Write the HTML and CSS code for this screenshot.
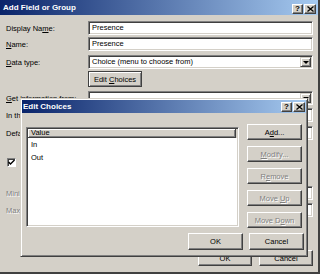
FILE: index.html
```html
<!DOCTYPE html>
<html lang="en">
<head>
    <meta charset="UTF-8">
    <title>Add Field or Group</title>
    <link rel="stylesheet" href="styles.css">
</head>
<body>
    <div class="dialog main">
        <div class="titlebar">
            <span class="title">Add Field or Group</span>
            <span class="tb-btns">
                <span class="tb-btn help">?</span>
                <span class="tb-btn close">
                    <svg width="7" height="6" viewBox="0 0 7 6"><path d="M0.5 0.5 L6.5 5.5 M6.5 0.5 L0.5 5.5" stroke="#000" stroke-width="1.3"/></svg>
                </span>
            </span>
        </div>
        <div class="form">
            <div class="row">
                <label>Display Na<u>m</u>e:</label>
                <div class="field">Presence</div>
            </div>
            <div class="row gap">
                <label><u>N</u>ame:</label>
                <div class="field">Presence</div>
            </div>
            <div class="row">
                <label><u>D</u>ata type:</label>
                <div class="field select">Choice (menu to choose from)<span class="drop"></span></div>
            </div>
            <div class="row gap">
                <label></label>
                <div><button class="btn default">Edit <u>C</u>hoices</button></div>
            </div>
            <div class="row">
                <label><u>G</u>et information from:</label>
                <div class="field select"><span class="drop"></span></div>
            </div>
            <div class="row">
                <label>In this folder:</label>
                <div class="field"></div>
            </div>
            <div class="row">
                <label>Default value:</label>
                <div class="field"></div>
            </div>
            <div class="row check-row">
                <label class="check"><span class="box"><svg width="7" height="7" viewBox="0 0 7 7"><path d="M0.5 3 L2.5 5 L6.5 1" fill="none" stroke="#000" stroke-width="1.4"/></svg></span>Cannot be blank</label>
                <div></div>
            </div>
            <div class="row muted">
                <label>Minimum:</label>
                <div class="field"></div>
            </div>
            <div class="row muted">
                <label>Maximum:</label>
                <div class="field"></div>
            </div>
        </div>
        <div class="footer">
            <button class="btn">OK</button>
            <button class="btn">Cancel</button>
        </div>

        <div class="dialog choices">
            <div class="titlebar small">
                <span class="title">Edit Choices</span>
                <span class="tb-btns">
                    <span class="tb-btn help">?</span>
                    <span class="tb-btn close">
                        <svg width="7" height="6" viewBox="0 0 7 6"><path d="M0.5 0.5 L6.5 5.5 M6.5 0.5 L0.5 5.5" stroke="#000" stroke-width="1.3"/></svg>
                    </span>
                </span>
            </div>
            <div class="choices-body">
                <div class="choices-main">
                    <div class="list">
                        <div class="list-head"><span class="col">Value</span></div>
                        <div class="item">In</div>
                        <div class="item">Out</div>
                    </div>
                    <div class="side">
                        <button class="btn">A<u>d</u>d...</button>
                        <button class="btn" disabled><u>M</u>odify...</button>
                        <button class="btn" disabled>R<u>e</u>move</button>
                        <button class="btn" disabled>Move <u>U</u>p</button>
                        <button class="btn" disabled>Move D<u>o</u>wn</button>
                    </div>
                </div>
                <div class="choices-footer">
                    <button class="btn wide">OK</button>
                    <button class="btn wide">Cancel</button>
                </div>
            </div>
        </div>
    </div>
</body>
</html>
```

FILE: styles.css
```css
* {
    box-sizing: border-box;
}

body {
    margin: 0;
    font-family: "Liberation Sans", Arial, sans-serif;
    font-size: 7.5px;
    color: #000;
    background-color: #d4d0c8;
}

.dialog {
    background-color: #d4d0c8;
}

.main {
    position: relative;
    width: 320px;
    height: 274px;
    border-right: 2px solid #404040;
    border-bottom: 2px solid #404040;
    display: flex;
    flex-direction: column;
}

.titlebar {
    display: flex;
    align-items: flex-start;
    height: 15px;
    padding: 0 2px 0 3px;
    background: linear-gradient(to right, #0a246a, #a6caf0);
    color: #fff;
    font-weight: bold;
    font-size: 8px;
}

.titlebar .title {
    flex: 1;
    line-height: 15px;
}

.tb-btns {
    display: flex;
    gap: 1px;
    margin-top: 4px;
}

.tb-btn {
    width: 11px;
    height: 10px;
    display: flex;
    align-items: center;
    justify-content: center;
    background-color: #d4d0c8;
    border: 1px solid;
    border-color: #fff #404040 #404040 #fff;
    box-shadow: inset -1px -1px #808080;
    color: #000;
    font-size: 8px;
    line-height: 8px;
}

.tb-btn.close {
    width: 12px;
}

.form {
    padding: 6px 0 0 6px;
}

.row {
    display: grid;
    grid-template-columns: 82px 225px;
    align-items: center;
    min-height: 14px;
    margin-bottom: 2px;
}

.row.gap {
    margin-bottom: 4px;
}

.row label {
    white-space: nowrap;
    overflow: visible;
}

.field {
    position: relative;
    height: 14px;
    padding: 0 3px;
    line-height: 12px;
    background-color: #fff;
    border: 1px solid;
    border-color: #808080 #fff #fff #808080;
    box-shadow: inset 1px 1px #404040, inset -1px -1px #d4d0c8;
    white-space: nowrap;
}

.drop {
    position: absolute;
    right: 1px;
    top: 1px;
    width: 11px;
    height: 10px;
    background-color: #d4d0c8;
    border: 1px solid;
    border-color: #d4d0c8 #404040 #404040 #d4d0c8;
    box-shadow: inset 1px 1px #fff, inset -1px -1px #808080;
}

.drop::after {
    content: "";
    position: absolute;
    left: 2px;
    top: 3px;
    border-left: 3px solid transparent;
    border-right: 3px solid transparent;
    border-top: 3px solid #000;
}

.btn {
    display: block;
    width: 55px;
    height: 16px;
    padding: 0;
    font-family: inherit;
    font-size: 7.5px;
    color: #000;
    background-color: #d4d0c8;
    border: 1px solid;
    border-color: #fff #404040 #404040 #fff;
    box-shadow: inset -1px -1px #808080;
    white-space: nowrap;
}

.btn.default {
    width: 54px;
    border-color: #404040;
    box-shadow: inset 1px 1px #fff, inset -1px -1px #808080, inset -2px -2px #d4d0c8;
}

.btn:disabled {
    color: #808080;
    text-shadow: 1px 1px #fff;
}

.row:nth-child(5) {
    margin-bottom: 3px;
}

.row:nth-child(6) {
    margin-bottom: 4px;
}

.check-row {
    margin-top: 15px;
    margin-bottom: 17px;
}

.check {
    display: flex;
    align-items: center;
    gap: 6px;
    padding-left: 1px;
}

.check .box {
    width: 9px;
    height: 9px;
    display: flex;
    align-items: center;
    justify-content: center;
    background-color: #fff;
    border: 1px solid;
    border-color: #808080 #fff #fff #808080;
    box-shadow: inset 1px 1px #404040;
}

.muted {
    margin-bottom: 3px;
}

.muted label {
    color: #808080;
    text-shadow: 1px 1px #fff;
}

.footer {
    margin-top: auto;
    display: flex;
    justify-content: flex-end;
    gap: 7px;
    padding: 0 5px 6px 0;
}

.footer .btn {
    width: 54px;
}

/* Edit Choices dialog, open over the main one */
.choices {
    position: absolute;
    left: 20px;
    top: 98px;
    width: 288px;
    height: 159px;
    border: 1px solid;
    border-color: #d4d0c8 #404040 #404040 #d4d0c8;
    box-shadow: inset 1px 1px #fff, inset -1px -1px #808080;
    padding: 1px;
}

.titlebar.small {
    height: 13px;
    padding: 0 1px 0 1px;
}

.titlebar.small .title {
    line-height: 13px;
}

.titlebar.small .tb-btns {
    margin-top: 2px;
}

.choices-body {
    padding: 11px 2px 5px 4px;
}

.choices-main {
    display: flex;
    gap: 8px;
}

.list {
    width: 213px;
    height: 100px;
    margin-top: 3px;
    background-color: #fff;
    border: 1px solid;
    border-color: #808080 #fff #fff #808080;
    box-shadow: inset 1px 1px #404040, inset -1px -1px #d4d0c8;
    padding: 1px;
}

.list-head {
    height: 9px;
    background-color: #d4d0c8;
    display: flex;
}

.list-head .col {
    width: 208px;
    height: 9px;
    padding-left: 3px;
    line-height: 8px;
    border-right: 1px solid #404040;
    border-bottom: 1px solid #404040;
    box-shadow: inset 1px 1px #fff, inset -1px -1px #808080;
}

.item {
    height: 13px;
    line-height: 13px;
    padding-left: 3px;
}

.side {
    display: flex;
    flex-direction: column;
    gap: 6px;
}

.choices-footer {
    display: flex;
    justify-content: flex-end;
    gap: 6px;
    margin-top: 5px;
}

.choices-footer .btn {
    height: 17px;
}
```
